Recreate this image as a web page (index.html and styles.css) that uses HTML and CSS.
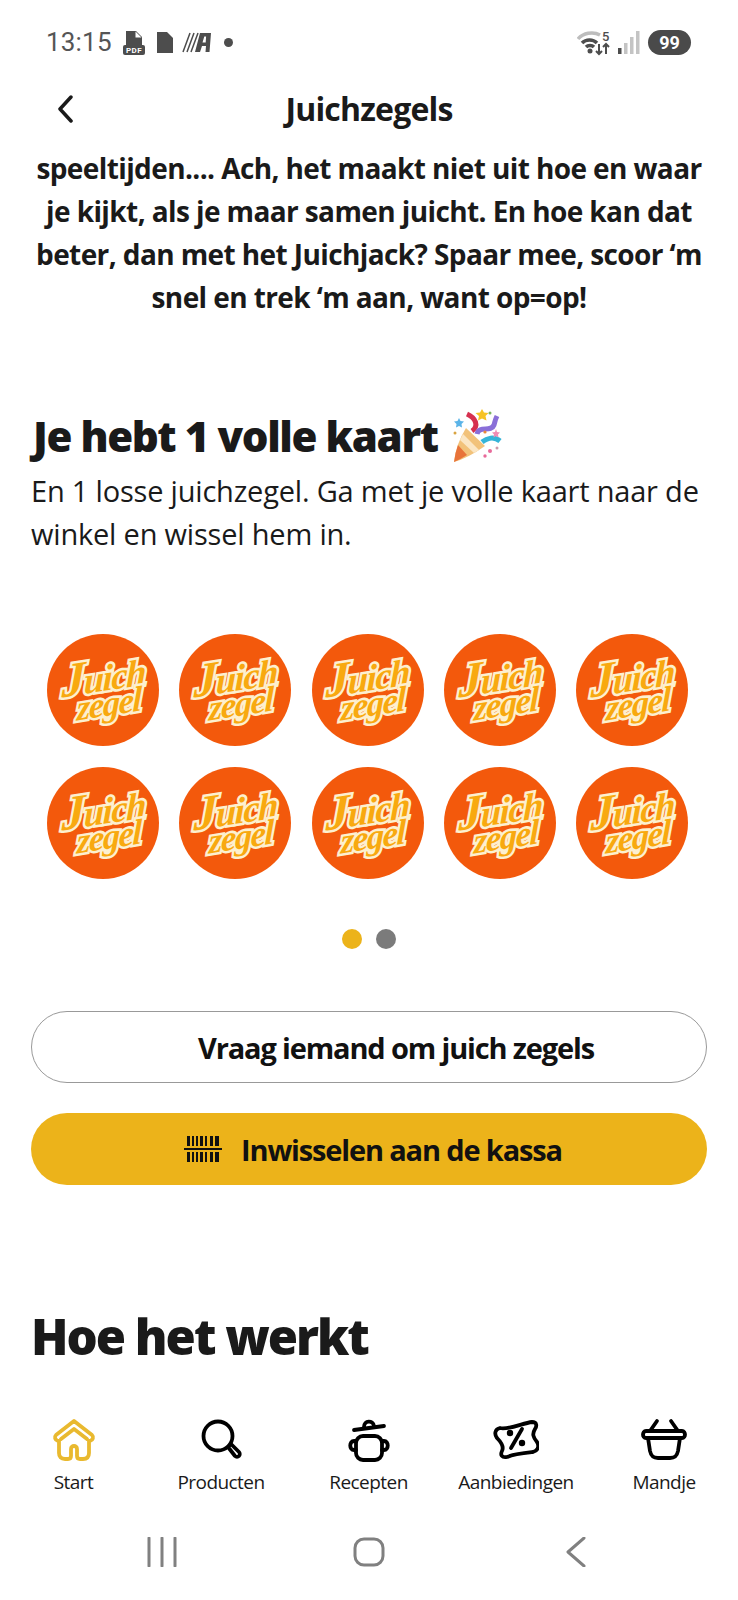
FILE: index.html
```html
<!DOCTYPE html>
<html lang="nl">
<head>
<meta charset="utf-8">
<title>Juichzegels</title>
<link rel="stylesheet" href="styles.css">
</head>
<body>
<div class="phone">
  <div class="status">
    <span class="time">13:15</span>
    <svg class="st-ic" width="24" height="25" viewBox="0 0 24 25"><path class="g" d="M4 1h10l6 6v9H4z"/><path fill="#fff" d="M13.500 1.500v6h6z"/><rect class="g" x="1" y="15" width="22" height="10" rx="2"/><text x="12" y="23" class="pdf">PDF</text></svg>
    <svg class="st-ic doc" width="18" height="21" viewBox="0 0 18 21"><path class="g" d="M1 0h10l6 6v15H1z"/></svg>
    <svg class="st-ic aa" width="30" height="21" viewBox="0 0 30 21"><g class="sl"><path d="M1 20 8 1M5 20 12 1M9 20 16 1"/></g><path class="g" d="M13 20 18 1h11l-1.500 19h-4l.5-6h-4l-2 6zm7.500-9.500h3.200l.4-6h-1.800z"/></svg>
    <span class="dot-st"></span>
    <span class="spacer"></span>
    <svg class="wifi" width="36" height="28" viewBox="0 0 36 28"><path class="lt" d="M1 11C6 5 16 3 23 7"/><path class="dk" d="M5 15c4-4 11-4 15 0M9 19c2-2 6-2 8 0"/><circle class="g" cx="13" cy="23" r="2.500"/><path class="dk thin" d="M22 16v10m-3-3 3 3 3-3M29 26V16m-3 3 3-3 3 3"/><text x="25" y="13" class="five">5</text></svg>
    <svg class="bars" width="24" height="24" viewBox="0 0 24 24"><rect class="g" x="1" y="18" width="3.500" height="6"/><rect class="lt-f" x="7" y="13" width="3.500" height="11"/><rect class="lt-f" x="13" y="7" width="3.500" height="17"/><rect class="lt-f" x="19" y="1" width="3.500" height="23"/></svg>
    <span class="batt">99</span>
  </div>

  <header class="top">
    <svg class="back" width="16" height="28" viewBox="0 0 16 28"><path d="M14 2 3 14l11 12"/></svg>
    <h1 class="title">Juichzegels</h1>
  </header>

  <main class="content">
    <p class="intro">speeltijden.... Ach, het maakt niet uit hoe en waar<br>je kijkt, als je maar samen juicht. En hoe kan dat<br>beter, dan met het Juichjack? Spaar mee, scoor ‘m<br>snel en trek ‘m aan, want op=op!</p>

    <h2 class="card-title">Je hebt 1 volle kaart
      <svg class="popper" width="50" height="54" viewBox="0 0 50 54">
        <path fill="#f2c27a" d="M14 19 33 37Q16 49 2 53 4 35 14 19z"/>
        <path fill="#e8733a" d="M2 53Q3 44 6 36L15 46Q9 50 2 53z"/>
        <path fill="#fbe6c4" d="M11 25 27 41l-5 3L8 31z"/>
        <path fill="none" stroke="#d6304f" stroke-width="5" d="M20 22C27 17 24 9 15 5"/>
        <path fill="none" stroke="#8a6fd8" stroke-width="5" d="M25 25c2-9 14-1 17-9 1-3 1-5 3-9"/>
        <path fill="none" stroke="#35b4d8" stroke-width="5" d="M30 33c5-4 12-6 18-1"/>
        <path fill="#f7c325" d="M30 0l2 3.500 4.500.5-3 3 1 4.500L30 9.500 26 11.500l1-4.500-3.500-3 4.500-.5z"/>
        <path fill="#5bb4e8" d="M7 9l1.500 3 3.500.5-2.500 2.500.5 3.500L7 17l-3 1.500.5-3.500L2 12.500 5.500 12z"/>
        <path fill="#f08cb4" d="M44 20l1 3 3 .5-2 2 .5 3-2.500-1.500-2.500 1.500.5-3-2-2 3-.5z"/>
        <circle cx="38" cy="42" r="2" fill="#e86a9a"/><circle cx="33" cy="47" r="1.700" fill="#e86a9a"/><circle cx="45" cy="39" r="1.500" fill="#c9a"/><circle cx="3" cy="24" r="1.500" fill="#d9a441"/><circle cx="38" cy="4" r="1.500" fill="#7bb661"/><circle cx="33" cy="23" r="1.600" fill="#e8873a"/>
      </svg>
    </h2>
    <p class="lead">En 1 losse juichzegel. Ga met je volle kaart naar de<br>winkel en wissel hem in.</p>

    <div class="coins">
      <div class="coin"><span class="logo"><span><span class="j">J</span>uich</span><span class="z">zegel</span></span></div>
      <div class="coin"><span class="logo"><span><span class="j">J</span>uich</span><span class="z">zegel</span></span></div>
      <div class="coin"><span class="logo"><span><span class="j">J</span>uich</span><span class="z">zegel</span></span></div>
      <div class="coin"><span class="logo"><span><span class="j">J</span>uich</span><span class="z">zegel</span></span></div>
      <div class="coin"><span class="logo"><span><span class="j">J</span>uich</span><span class="z">zegel</span></span></div>
      <div class="coin"><span class="logo"><span><span class="j">J</span>uich</span><span class="z">zegel</span></span></div>
      <div class="coin"><span class="logo"><span><span class="j">J</span>uich</span><span class="z">zegel</span></span></div>
      <div class="coin"><span class="logo"><span><span class="j">J</span>uich</span><span class="z">zegel</span></span></div>
      <div class="coin"><span class="logo"><span><span class="j">J</span>uich</span><span class="z">zegel</span></span></div>
      <div class="coin"><span class="logo"><span><span class="j">J</span>uich</span><span class="z">zegel</span></span></div>
    </div>

    <div class="pager"><span class="pdot on"></span><span class="pdot"></span></div>

    <button class="btn outline">Vraag iemand om juich zegels</button>
    <button class="btn solid">
      <svg width="38" height="28" viewBox="0 0 38 28"><path class="bc" d="M3 1h3v10H3zM8 1h2v10H8zM12 1h2v10h-2zM16 1h3v10h-3zM21 1h2v10h-2zM26 1h3v10h-3zM31 1h4v10h-4zM3 17h3v10H3zM8 17h2v10H8zM12 17h2v10h-2zM16 17h3v10h-3zM21 17h2v10h-2zM26 17h3v10h-3zM31 17h4v10h-4zM0 13h38v2H0z"/></svg>
      <span>Inwisselen aan de kassa</span>
    </button>

    <h2 class="how">Hoe het werkt</h2>
  </main>

  <nav class="tabs">
    <div class="tab active">
      <svg class="ti" width="44" height="44" viewBox="0 0 44 44"><path d="M22 3 40 17c2 2 1 5-2 6h-1v12c0 4-2 6-6 6h-3c-2 0-3-1-3-3v-7c0-4-6-4-6 0v7c0 2-1 3-3 3h-3c-4 0-6-2-6-6V23H6C3 22 2 19 4 17z"/><path d="M9 21 22 11l13 10"/></svg>
      <span>Start</span>
    </div>
    <div class="tab">
      <svg class="ti" width="44" height="44" viewBox="0 0 44 44"><circle cx="19" cy="18" r="14.500"/><path d="M29 29l3-3 8 8c1 1 1 3 0 4s-3 1-4 0z"/></svg>
      <span>Producten</span>
    </div>
    <div class="tab">
      <svg class="ti" width="46" height="44" viewBox="0 0 46 44"><path d="M8 12 38 8"/><path d="M18 9c0-7 9-7 10-1"/><rect x="10" y="18" width="26" height="24" rx="7"/><path d="M10 23H8c-5 0-5 9 0 9h2M36 23h2c5 0 5 9 0 9h-2"/></svg>
      <span>Recepten</span>
    </div>
    <div class="tab">
      <svg class="ti" width="46" height="44" viewBox="0 0 46 44"><path d="M7 10C16 12 30 5 39 4c5 0 5 4 3 7-3 5-2 8 2 13 3 5 0 9-4 10-9 1-19 2-26 5-5 1-7-2-5-6 2-4 0-8-5-13-3-4-2-9 3-10z"/><path d="M29 11 18 30"/><circle class="fill" cx="17" cy="15" r="3.200"/><circle class="fill" cx="29" cy="25" r="3.200"/></svg>
      <span>Aanbiedingen</span>
    </div>
    <div class="tab">
      <svg class="ti" width="46" height="44" viewBox="0 0 46 44"><path d="M16 3 9 13M30 3l7 10"/><path d="M5 13h36c4 0 4 7 0 7H5c-4 0-4-7 0-7z"/><path d="M7 20l2 13c1 5 3 7 8 7h12c5 0 7-2 8-7l2-13"/></svg>
      <span>Mandje</span>
    </div>
  </nav>

  <div class="sysbar">
    <svg width="32" height="30" viewBox="0 0 32 30"><path d="M3 1v28M16 1v28M29 1v28"/></svg>
    <svg width="32" height="30" viewBox="0 0 32 30"><rect x="2" y="2" width="28" height="26" rx="9"/></svg>
    <svg width="22" height="30" viewBox="0 0 22 30"><path d="M19 1 3 15l16 14"/></svg>
  </div>
</div>
</body>
</html>
```
FILE: styles.css
```css
* { box-sizing: border-box; }
html, body { margin: 0; padding: 0; background: #fff; }
.phone {
  width: 738px; height: 1600px; overflow: hidden;
  display: flex; flex-direction: column;
  font-family: "Open Sans", "Noto Sans", sans-serif; color: #1a1a1a;
}

/* status bar */
.status { height: 80px; flex: none; padding: 4px 46px 0; display: flex; align-items: center; gap: 10px; color: #555; }
.time { font: 400 26px Roboto, sans-serif; letter-spacing: .2px; color: #555; }
.st-ic { flex: none; }
.g { fill: #4d4d4d; }
.pdf { font: 700 8px Roboto, sans-serif; fill: #fff; text-anchor: middle; letter-spacing: .5px; }
.sl { stroke: #4d4d4d; stroke-width: 1.500; fill: none; }
.aa { margin-left: -2px; }
.dot-st { width: 9px; height: 9px; border-radius: 50%; background: #4d4d4d; margin-left: 2px; }
.spacer { flex: 1; }
.wifi { fill: none; margin-right: -6px; }
.lt { fill: none; stroke: #bdbdbd; stroke-width: 3.500; }
.lt-f { fill: #c4c4c4; }
.dk { fill: none; stroke: #4d4d4d; stroke-width: 3.500; }
.dk.thin { stroke-width: 2; }
.five { font: 500 13px Roboto, sans-serif; fill: #4d4d4d; }
.batt {
  width: 43px; height: 25px; border-radius: 13px; background: #4a4a4a; color: #fff;
  font: 700 18px/25px Roboto, sans-serif; text-align: center; margin-left: -3px; margin-right: 1px;
}

/* header */
.top { height: 58px; flex: none; position: relative; display: flex; align-items: center; justify-content: center; }
.back { position: absolute; left: 57px; top: 15px; fill: none; stroke: #1a1a1a; stroke-width: 3.500; stroke-linecap: round; stroke-linejoin: round; }
.title { margin: 0; font-size: 32px; font-weight: 700; line-height: 58px; letter-spacing: -.8px; color: #1a1a1a; }

/* scrolling content */
.content { flex: 1; min-height: 0; overflow: hidden; padding: 9px 31px 0; }
.intro { margin: 0; font-size: 28px; font-weight: 700; line-height: 43px; text-align: center; letter-spacing: -.6px; white-space: nowrap; }
.card-title { margin: 87px 0 0 2px; height: 60px; font-size: 42px; font-weight: 800; line-height: 60px; letter-spacing: -1.400px; white-space: nowrap; display: flex; align-items: center; gap: 14px; }
.popper { flex: none; }
.lead { margin: 3px 0 0; font-size: 29px; font-weight: 400; line-height: 43px; letter-spacing: -.2px; white-space: nowrap; }

.coins { margin: 79px 0 0 16px; display: grid; grid-template-columns: repeat(5, 112px); column-gap: 20.250px; row-gap: 21px; }
.coin { width: 112px; height: 112px; border-radius: 50%; background: #f3590c; display: flex; align-items: center; justify-content: center; }
.logo {
  display: flex; flex-direction: column; transform: rotate(-9deg) skewX(-10deg);
  font: italic 700 37px/26px "Liberation Serif", serif; letter-spacing: -1.500px;
  color: #f8a90f; -webkit-text-stroke: 5px #fdf0cf; paint-order: stroke fill; text-align: center;
}
.j { font-size: 48px; line-height: 26px; }
.z { font-size: 35px; margin-left: 12px; }

.pager { margin-top: 50px; display: flex; justify-content: center; gap: 14px; }
.pdot { width: 20px; height: 20px; border-radius: 50%; background: #7b7b7b; }
.pdot.on { background: #ecb31a; }

.btn {
  display: flex; align-items: center; justify-content: center; gap: 19px;
  width: 676px; height: 72px; border-radius: 36px; border: 0; padding: 0;
  font-family: inherit; font-size: 29px; font-weight: 700; letter-spacing: -1.150px; color: #111;
}
.outline { margin-top: 62px; background: #fff; border: 1.500px solid #999; padding-left: 54px; }
.solid { margin-top: 30px; background: #ecb31a; padding-left: 8px; }
.bc { fill: #111; }

.how { margin: 118px 0 0; font-size: 49px; font-weight: 800; line-height: 66px; letter-spacing: -2px; white-space: nowrap; }

/* tab bar */
.tabs { height: 118px; flex: none; display: grid; grid-template-columns: 147px 148px 147px 148px 148px; padding-top: 10px; background: #fff; }
.tab { display: flex; flex-direction: column; align-items: center; gap: 7px; font-size: 19px; letter-spacing: -.55px; color: #1a1a1a; }
.ti { fill: none; stroke: #000; stroke-width: 3.800; stroke-linecap: round; stroke-linejoin: round; }
.ti .fill { fill: #000; stroke: none; }
.active .ti { stroke: #e9b92f; }

/* system navigation */
.sysbar { height: 74px; flex: none; display: grid; grid-template-columns: repeat(3, 207px); justify-content: center; justify-items: center; padding-top: 11px; align-items: start; }
.sysbar svg { fill: none; stroke: #808080; stroke-width: 3; stroke-linecap: round; stroke-linejoin: round; }
```
